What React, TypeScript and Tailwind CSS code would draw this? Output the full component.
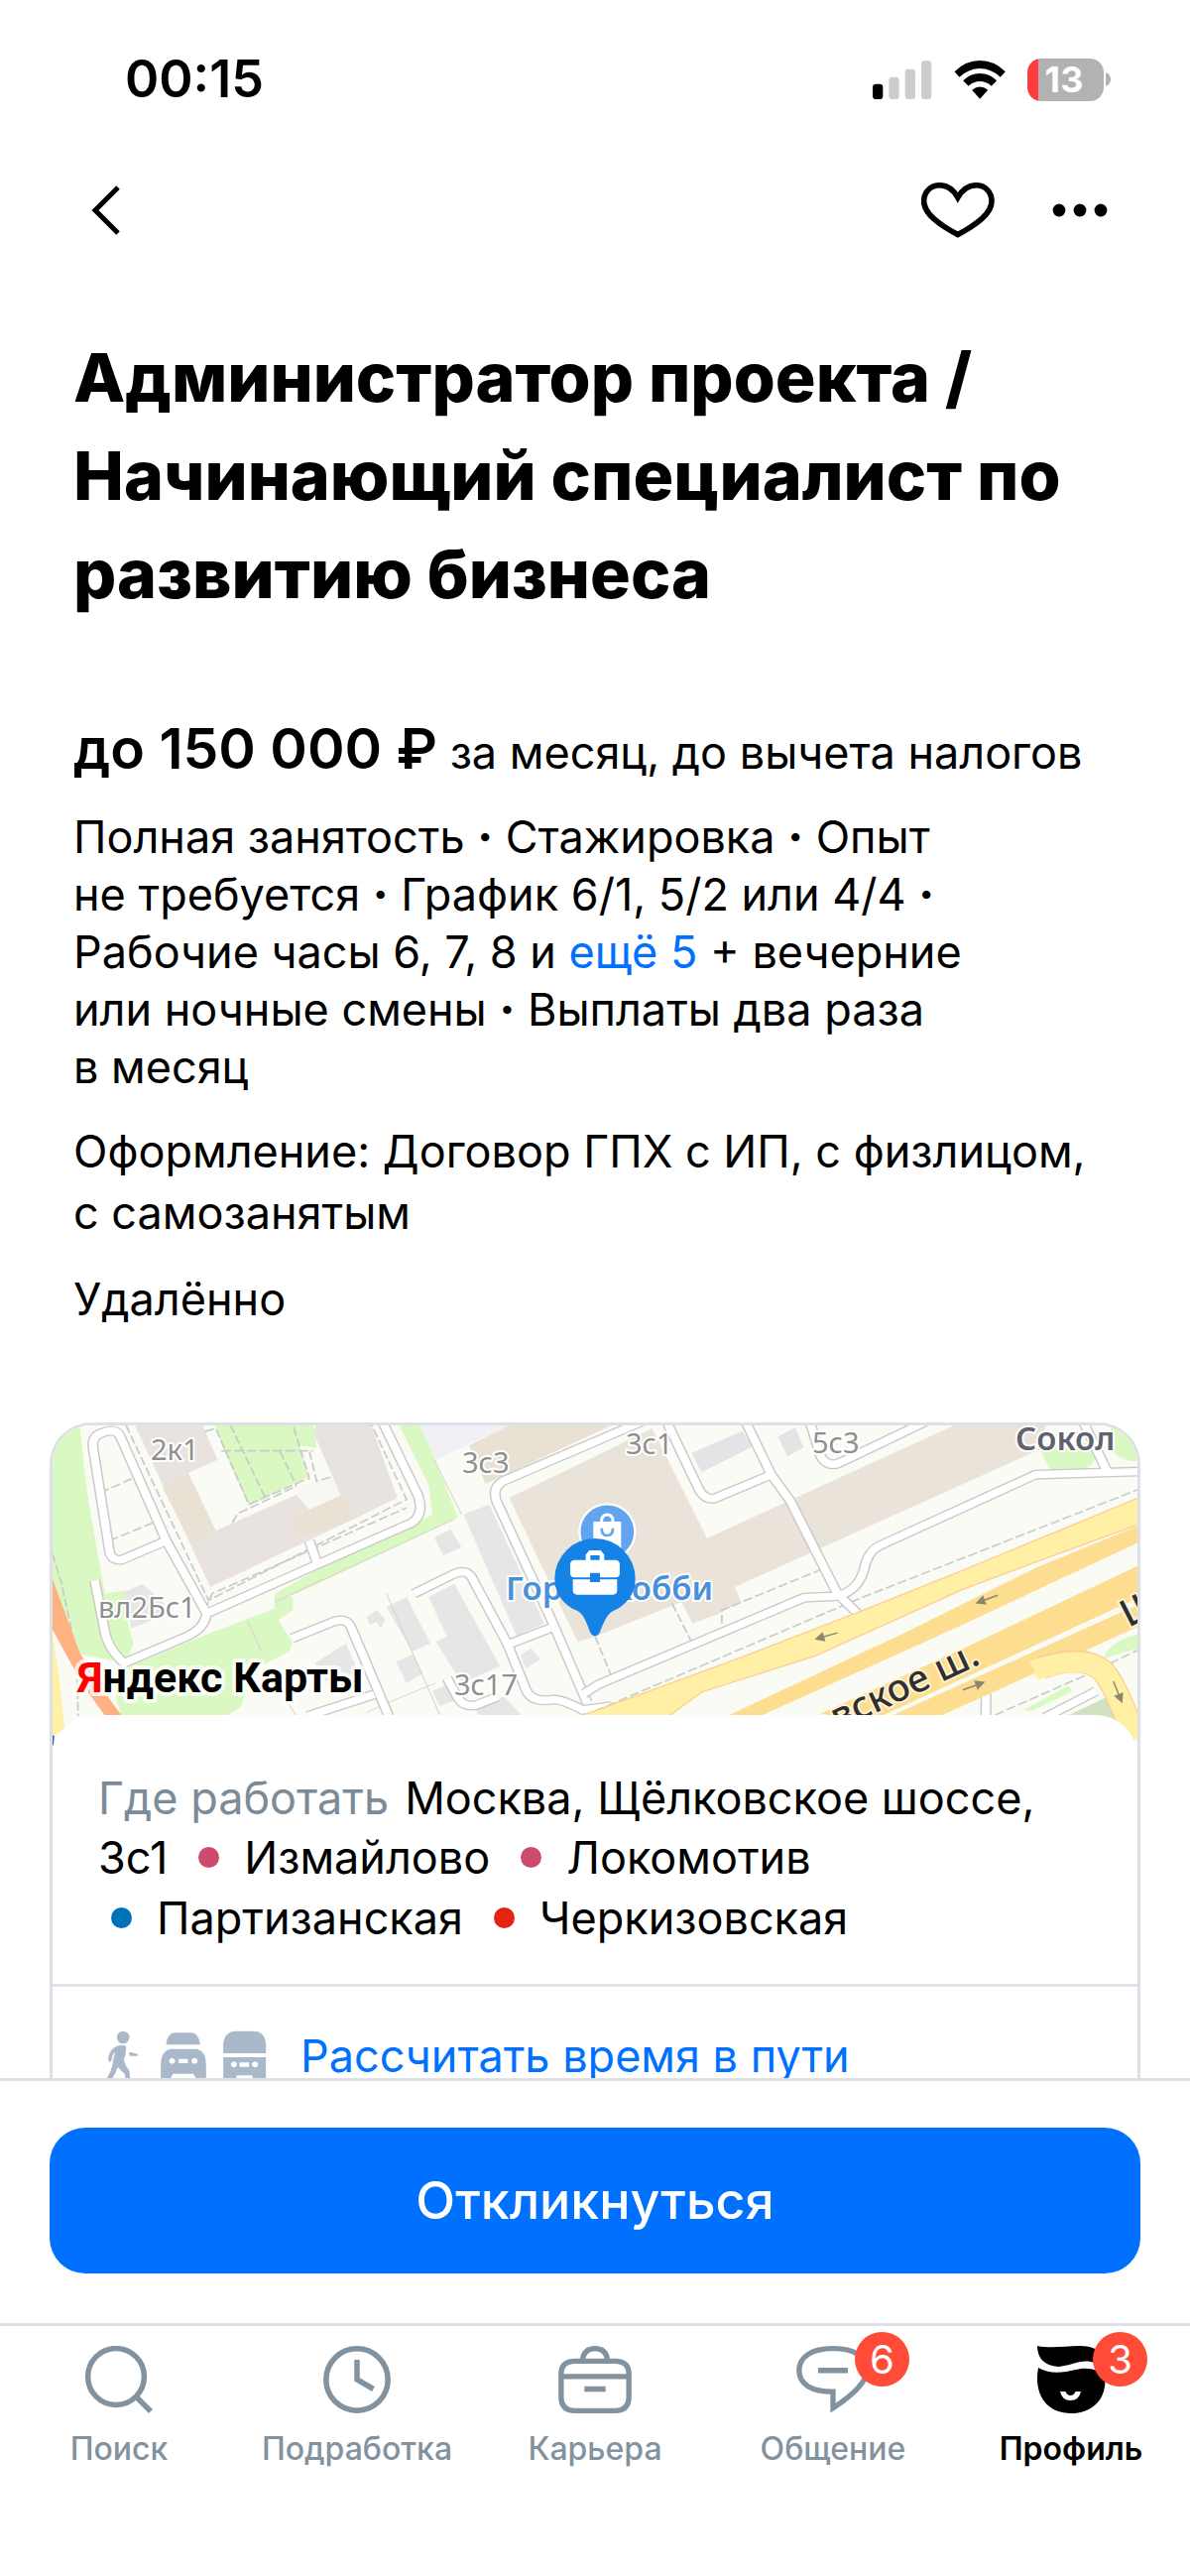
import React from "react";

const roadsLeft = [
  "M345 400L225 457Q195 462 190 430L145 115Q143 80 175 72Q208 58 220 85L345 400L455 620",
  "M455 620L1015 345Q1048 320 1032 265L930 30",
  "M455 620Q450 665 400 690L230 770Q182 722 175 660L150 520",
  "M757 470L735 400",
  "M1640 40L1262 220Q1232 240 1245 280L1395 640L1492 890",
  "M1392 664L1280 712",
  "M1020 560L1130 500Q1168 482 1182 520L1275 712L1325 850Q1340 892 1400 880Q1425 880 1480 912L1560 900",
  "M688 695L800 645Q838 630 850 665L955 940",
  "M730 930L912 865",
  "M1110 815L1140 875Q1155 905 1190 897L1248 872",
];
const roadsRight = [
  "M-30 862L10 834L570 572L650 568Q712 560 732 490Q742 432 775 415L1200 200L1500 190",
  "M410 40L480 200L532 280L660 560L715 620",
  "M480 200L325 272Q300 278 283 245L195 40",
  "M585 40L615 145Q632 178 665 165L900 40",
  "M1330 40L1395 190",
  "M1065 862L1065 940",
  "M1225 935L1365 855",
];
const dashLeft = [
  "M235 50L460 580L1000 275L905 50",
  "M450 610L470 560L1000 300",
  "M165 255L275 200",
  "M190 400L310 345",
  "M450 70L480 60L570 290L735 210L690 50",
  "M495 128L745 128",
  "M520 50L615 270",
  "M655 130L700 235",
  "M735 130L755 220L800 205",
  "M525 345L540 318L690 240",
  "M35 440L60 530L100 740L105 930",
];
const dashRight = [
  "M0 915L720 575L1480 245",
  "M345 650L345 610L620 485",
  "M210 590L265 712",
  "M0 690L48 820",
  "M1090 927L1330 810L1480 730",
];

function Roads({ paths }: { paths: string[] }) {
  return (
    <g fill="none" strokeLinejoin="round">
      {paths.map((d) => (
        <path key={d} d={d} stroke="#c9c9c9" strokeWidth="30" />
      ))}
      {paths.map((d) => (
        <path key={d} d={d} stroke="#ffffff" strokeWidth="22" />
      ))}
    </g>
  );
}

function Dashes({ paths }: { paths: string[] }) {
  return (
    <g fill="none" stroke="#cbcbcb" strokeWidth="5" strokeDasharray="26 9">
      {paths.map((d) => (
        <path key={d} d={d} />
      ))}
    </g>
  );
}

function Arrow({ x, y, a }: { x: number; y: number; a: number }) {
  return (
    <g transform={`translate(${x} ${y}) rotate(${a})`}>
      <path d="M0 0H14" stroke="#8d8670" strokeWidth="1.5" />
      <path d="M-10 0L0 -5V5Z" fill="#8d8670" />
    </g>
  );
}

function CityMap() {
  return (
    <svg
      viewBox="3 3 1094 335"
      preserveAspectRatio="xMidYMid slice"
      className="block h-[335px] w-full bg-[#fbfbf6]"
      role="img"
      aria-label="Карта: Москва, Щёлковское шоссе, 3с1"
    >
      <rect x="0" y="0" width="1100" height="340" fill="#fbfbf6" />
      <g transform="translate(-10 -14) scale(0.37 0.3333)">
        <g fill="#daf8c2">
          <path d="M30 40L108 40L130 260L165 480L178 560L235 550L235 620L255 710L235 770L100 740L30 520Z" />
          <path d="M225 785L300 755L440 690L640 605V570H690V610L650 640L690 710L680 735L600 780L560 860L550 900L510 930H222L205 860Z" />
          <path d="M975 40H1035L1080 160L1140 330L850 482L640 590V562L760 485L1070 322L1060 230Z" />
          <path d="M475 40H745L755 120L705 110L735 205L570 295L520 170L500 120Z" />
        </g>
        <path d="M1030 40H1300L1080 155Z" fill="#f1f1f5" />
        <g fill="#e8e3de">
          <path d="M255 40H440L485 155L405 195L480 370L700 260L735 305L820 262L745 70L760 40H900L975 270L855 335L465 540Z" />
        </g>
        <g fill="#eae1d5">
          <path d="M335 240L405 195L480 370L415 410Z" />
          <path d="M688 325L830 265L855 335L700 392Z" />
          <path d="M1170 112L1300 40H1580L1215 228Z" />
        </g>
        <path d="M700 262L735 305L820 262L795 205L750 220L710 240Z" fill="#f7f8f1" />
        <g fill="#e6e6e7">
          <path d="M1155 320L1225 290L1375 650L1300 688Z" />
          <path d="M1060 570L1130 530L1255 780L1150 830L1080 705L1110 690Z" />
          <path d="M945 600L1000 570L1065 710L1015 735Z" />
          <path d="M1075 390L1120 365L1150 420L1100 445Z" />
          <path d="M890 630L920 610L942 640L930 665L918 645L900 655Z" />
          <path d="M1310 745L1340 725L1365 760L1325 785Z" />
          <path d="M970 765L1015 745L1045 800L1000 830Z" />
          <path d="M750 770L835 710L870 800L790 840Z" />
          <path d="M230 555L280 530L340 590L330 630L250 665Z" />
          <path d="M1190 912L1265 870L1320 935H1200Z" />
          <path d="M1070 855L1110 835L1140 880L1090 900Z" />
        </g>
        <path d="M640 585L1130 335M945 560L1090 925M950 890L1080 830M565 640L605 735M670 880L700 930M890 920L950 890M1075 155L1150 320" fill="none" stroke="#d9d4cc" strokeWidth="3" />
        <Dashes paths={dashLeft} />
        <Roads paths={roadsLeft} />
        <path d="M33 510L60 590L110 740L165 840L228 935H182L120 840L70 740L33 665Z" fill="#ffb181" />
        <path d="M33 665L55 830L68 970L33 990Z" fill="#fff0a8" />
        <path d="M30 985L40 990L38 1015L30 1030Z" fill="#3c62b8" />
        <g transform="translate(1514 0)">
          <path d="M-234 270L0 145L155 60L305 392L1000 40H1230L1215 122L380 540L397 583L335 622L265 650L235 585L0 690L-48 706Z" fill="#eae3d9" />
          <g fill="#e4e4e6">
            <path d="M262 135L400 68L430 115L290 193Z" />
            <path d="M498 85L545 57L568 118L524 145Z" />
          </g>
          <g fill="#daf8c2">
            <path d="M1210 120L1370 100Q1370 165 1340 180L1240 187Z" />
            <path d="M1405 40H1490V160Q1430 165 1405 120Z" />
            <path d="M1388 755Q1390 710 1490 678V722Z" />
            <path d="M1168 912L1290 838L1300 856L1190 915Z" />
          </g>
          <path d="M1285 930L1390 875L1430 940H1290Z" fill="#cfe3c4" />
          <Dashes paths={dashRight} />
          <Roads paths={roadsRight} />
          <path d="M-60 935L0 915L400 752L720 615L1000 490L1490 266V347L1200 465L1000 548L600 748L290 858L195 935Z" fill="#fff0a5" stroke="#fbcf93" strokeWidth="4" />
          <path d="M1490 350V400L1000 655L440 935H350L850 675L1200 482Z" fill="#fddd8f" />
          <path d="M1490 470V568L770 935H590L1010 722Z" fill="#fddd8f" />
          <path d="M1490 588V655L1220 790L930 935H795Z" fill="#fddd8f" />
          <path d="M1215 785Q1330 740 1385 795Q1425 850 1470 1000" fill="none" stroke="#fbcf93" strokeWidth="68" />
          <path d="M1195 792Q1330 740 1385 795Q1425 850 1470 1000" fill="none" stroke="#fff0a5" strokeWidth="61" />
        </g>
      </g>

      <Arrow x={781} y={216} a={-16} />
      <Arrow x={943} y={179} a={-20} />
      <Arrow x={934} y={265} a={160} />
      <Arrow x={1078} y={274} a={248} />

      <g fontFamily="'Noto Sans', sans-serif" stroke="#ffffff" strokeWidth="4" paintOrder="stroke" strokeLinejoin="round">
        <g fontSize="29" fill="#8f8f8f">
          <text x="102" y="38">2к1</text>
          <text x="416" y="51">3с3</text>
          <text x="49" y="197">вл2Бс1</text>
          <text x="408" y="275">3с17</text>
          <text x="581" y="32">3с1</text>
          <text x="769" y="31">5с3</text>
        </g>
        <text x="974" y="28" fontSize="33" fontWeight="600" fill="#62626c">Сокол</text>
        <text x="460" y="179" fontSize="33" fontWeight="600" fill="#4a90d9">Город Хобби</text>
        <g fontSize="38" fontWeight="500" fill="#2f2f33" stroke="#fff3d0">
          <text transform="translate(940 243) rotate(-25)" textAnchor="end">Щёлковское ш.</text>
          <text transform="translate(1088 207) rotate(-27)">Щёлковское ш.</text>
        </g>
      </g>
      <text x="28" y="272" fontFamily="Roboto, 'Noto Sans', sans-serif" fontSize="43" fontWeight="700" stroke="#ffffff" strokeOpacity="0.8" strokeWidth="8" paintOrder="stroke" strokeLinejoin="round">
        <tspan fill="#ff0000">Я</tspan>
        <tspan fill="#000000">ндекс Карты</tspan>
      </text>

      <g transform="translate(440 56) scale(0.3333)">
        <circle cx="367" cy="163" r="84" fill="#62a5ee" stroke="#ffffff" strokeWidth="7" />
        <path d="M325 132H409V215H325Z" fill="#ffffff" />
        <path d="M350 135V128a17 17 0 0 1 34 0V135" fill="none" stroke="#ffffff" strokeWidth="9" />
        <path d="M350 152q0 22 17 22t17 -22" fill="none" stroke="#62a5ee" strokeWidth="8" />
        <path d="M330 183A122 122 0 0 1 452 305C452 350 425 385 385 402C366 411 355 440 343 470Q330 486 317 470C305 440 296 411 277 402C235 385 208 350 208 305A122 122 0 0 1 330 183Z" fill="#1583e6" />
        <path d="M302 250V232L313 219H347L358 232V250H344V234H316V250Z" fill="#ffffff" />
        <path d="M270 248H390Q405 248 405 262V288Q405 301 392 301H345V287H315V301H268Q255 301 255 288V262Q255 248 270 248Z" fill="#ffffff" />
        <path d="M263 307H315V315H345V307H397V340Q397 353 384 353H276Q263 353 263 340Z" fill="#ffffff" />
      </g>
    </svg>
  );
}

function StatusBar() {
  return (
    <div className="flex h-[160px] items-center justify-between pr-[80px] pl-[126px]">
      <span className="text-[52px] leading-[60px] font-semibold">00:15</span>
      <div className="flex items-center gap-[22px]">
        <svg viewBox="54 60 180 117" className="h-[39px] w-[60px]" aria-label="Сигнал сети">
          <rect x="54" y="131" width="31" height="46" rx="10" fill="#000" />
          <g fill="#cdcdcd">
            <rect x="103" y="110" width="31" height="67" rx="10" />
            <rect x="152" y="86" width="31" height="91" rx="10" />
            <rect x="201" y="61" width="31" height="116" rx="10" />
          </g>
        </svg>
        <svg viewBox="301 60 155 117" className="h-[39px] w-[52px]" aria-label="Wi-Fi">
          <path d="M302 94Q335 60 379 60T456 94L441 110Q412 84 379 84T317 110Z" />
          <path d="M328 121Q350 99 379 99T430 121L414 137Q398 123 379 123T344 137Z" />
          <path d="M355 149Q379 130 403 149L379 176Z" />
        </svg>
        <div className="flex items-center gap-[2px]">
          <div className="flex h-[43px] w-[77px] items-center justify-center rounded-[14px] bg-[linear-gradient(to_right,#ff3b41_11px,#b2b2b2_11px)] pr-[3px] text-[36px] leading-[43px] font-bold text-white">
            13
          </div>
          <svg viewBox="0 0 5 14" className="h-[14px] w-[5px]" aria-hidden="true">
            <path d="M0 0Q5 2 5 7T0 14Z" fill="#b2b2b2" />
          </svg>
        </div>
      </div>
    </div>
  );
}

function Header() {
  return (
    <header className="flex h-[104px] items-center justify-between pr-[83px] pl-[92px]">
      <button type="button" aria-label="Назад">
        <svg viewBox="0 0 30 50" className="h-[50px] w-[30px]" fill="none" stroke="#000" strokeWidth="5">
          <path d="M27 2L4 25L27 48" />
        </svg>
      </button>
      <div className="flex items-center gap-[58px]">
        <button type="button" aria-label="В избранное">
          <svg viewBox="207 433 223 168" className="h-[56px] w-[74px]" fill="none" stroke="#000" strokeWidth="17">
            <path d="M318 478Q297 441 263 441C235 441 215 462 215 489C215 528 262 561 318 591C374 561 421 528 421 489C421 462 401 441 374 441Q340 441 318 478Z" />
          </svg>
        </button>
        <button type="button" aria-label="Ещё">
          <svg viewBox="0 0 56 14" className="h-[14px] w-[56px]">
            <circle cx="7" cy="7" r="6.4" />
            <circle cx="28" cy="7" r="6.4" />
            <circle cx="49" cy="7" r="6.4" />
          </svg>
        </button>
      </div>
    </header>
  );
}

function Metro({ dot, name }: { dot: string; name: string }) {
  return (
    <span className="inline-flex items-baseline">
      <span className={"mr-[25px] ml-[13px] size-[21px] self-center rounded-full " + dot} />
      {name}
    </span>
  );
}

function Dot() {
  return <span className="font-extrabold">·</span>;
}

function TransportIcons() {
  return (
    <svg viewBox="84 82 482 162" className="h-[54px] w-[161px]" fill="#a9b9c9" aria-hidden="true">
      <circle cx="132" cy="103" r="19" />
      <path d="M112 130Q128 123 141 130Q142 150 134 172Q140 190 151 205L155 244H141L137 214L116 193Q108 215 97 230L84 244L76 236Q92 216 99 190Q102 165 108 147Q98 155 97 173Q91 180 87 173Q86 142 112 130Z" />
      <path d="M150 147L176 153V159H152Z" />
      <path d="M262 125Q265 89 290 89H338Q361 89 365 125Z" />
      <path fillRule="evenodd" d="M275 138H355Q383 145 383 185V244H352V226L345 213H283L276 226V244H246V185Q246 145 275 138ZM280 165a9 9 0 1 0 .1 0ZM348 165a9 9 0 1 0 .1 0ZM300 168V181H328V168Z" />
      <path d="M435 151V125Q437 84 475 84H525Q562 84 564 125V151Z" />
      <path fillRule="evenodd" d="M435 163H564V244H530L522 218H476L468 244H435ZM467 176a9 9 0 1 0 .1 0ZM531 176a9 9 0 1 0 .1 0ZM484 179V192H513V179Z" />
    </svg>
  );
}

const navIcon = "h-[68px] w-[74px]";

const tabs = [
  {
    label: "Поиск",
    icon: (
      <svg viewBox="-3 0 74 68" className={navIcon} fill="none" stroke="currentColor" strokeWidth="5.5">
        <circle cx="31" cy="31" r="28.4" />
        <path d="M51 51L66 66" />
      </svg>
    ),
  },
  {
    label: "Подработка",
    icon: (
      <svg viewBox="-3 0 74 68" className={navIcon} fill="none" stroke="currentColor" strokeWidth="5.5">
        <circle cx="34" cy="34" r="31.2" />
        <path d="M34 14V34L50.500 43.500" />
      </svg>
    ),
  },
  {
    label: "Карьера",
    icon: (
      <svg viewBox="130 75 220 203" className={navIcon} fill="none" stroke="currentColor" strokeWidth="16">
        <path d="M180 121H300Q342 121 342 160V228Q342 270 300 270H180Q138 270 138 228V160Q138 121 180 121ZM138 167H342M208 205H272M202 120Q206 83 240 83T278 120" />
      </svg>
    ),
  },
  {
    label: "Общение",
    badge: "6",
    icon: (
      <svg viewBox="850 75 220 203" className={navIcon} fill="none" stroke="currentColor" strokeWidth="16">
        <path d="M915 149H1005M960 262V213C895 213 858 190 858 150C858 108 895 83 960 83C1025 83 1062 108 1062 148C1062 185 1012 228 960 262Z" />
      </svg>
    ),
  },
  {
    label: "Профиль",
    badge: "3",
    active: true,
    icon: (
      <svg viewBox="-3 0 74 68" className={navIcon} fill="currentColor">
        <path d="M0 0C14 3 28 0 43 0Q62 0 66 12V23C50 8 38 20 21 21Q0 19 0 0Z" />
        <path d="M1 22C14 29 25 27 39 24C52 21 60 24 68 30C71 53 56 68 34 68C10 68 -4 50 1 22ZM23 46Q25 55 33.500 55T44 46H38.500Q37 50 33.500 50T28.500 46Z" fillRule="evenodd" />
      </svg>
    ),
  },
];

function TabBar() {
  return (
    <nav className="grid h-[255px] grid-cols-5 border-t-[3px] border-[#dfe2e7]">
      {tabs.map((tab) => (
        <a
          key={tab.label}
          href="#"
          aria-current={tab.active ? "page" : undefined}
          className={"flex flex-col items-center gap-[16px] pt-[20px] " + (tab.active ? "font-semibold text-black" : "font-medium text-[#82929e]")}
        >
          <span className="relative">
            {tab.icon}
            {tab.badge && (
              <span className="absolute -top-[14px] -right-[40px] flex size-[55px] items-center justify-center rounded-full bg-[#ff4b38] text-[40px] leading-none font-normal text-white">
                {tab.badge}
              </span>
            )}
          </span>
          <span className="text-[32px] leading-[40px]">{tab.label}</span>
        </a>
      ))}
    </nav>
  );
}

export default function App() {
  return (
    <div className="flex h-screen flex-col bg-white font-['Inter',sans-serif] text-black">
      <StatusBar />
      <Header />
      <main className="min-h-0 flex-1 overflow-y-auto [scrollbar-width:none]">
        <div className="px-[74px] pt-[67px]">
          <h1 className="text-[68px] leading-[99px] font-extrabold">
            Администратор проекта /<br />
            Начинающий специалист по
            <br />
            развитию бизнеса
          </h1>
          <p className="mt-[89px] text-[45px] leading-[76px]">
            <span className="text-[57px] font-semibold">до 150 000 ₽</span> за месяц, до вычета налогов
          </p>
          <p className="mt-[18px] text-[45px] leading-[58px]">
            Полная занятость <Dot /> Стажировка <Dot /> Опыт
            <br />
            не требуется <Dot /> График 6/1, 5/2 или 4/4 <Dot />
            <br />
            Рабочие часы 6, 7, 8 и{" "}
            <a href="#" className="text-[#0070ff]">
              ещё 5
            </a>{" "}
            + вечерние
            <br />
            или ночные смены <Dot /> Выплаты два раза
            <br />в месяц
          </p>
          <p className="mt-[25px] text-[45px] leading-[62px]">
            Оформление: Договор ГПХ с ИП, с физлицом,
            <br />с самозанятым
          </p>
          <p className="mt-[25px] text-[45px] leading-[62px]">Удалённо</p>
        </div>

        <section className="mx-[50px] mt-[93px] overflow-hidden rounded-t-[42px] border-[3px] border-b-0 border-[#dde1e7]">
          <CityMap />
          <div className="relative -mt-[43px] rounded-t-[42px] bg-white px-[46px] pt-[54px] pb-[36px]">
            <p className="text-[45px] leading-[59px]">
              <span className="mr-[16px] text-[#7c8b98]">Где работать</span>Москва, Щёлковское шоссе,
            </p>
            <div className="flex flex-wrap gap-x-[18px] text-[45px] leading-[61px]">
              <span>3с1</span>
              <Metro dot="bg-[#cd4c6e]" name="Измайлово" />
              <Metro dot="bg-[#cd4c6e]" name="Локомотив" />
            </div>
            <div className="flex flex-wrap gap-x-[18px] text-[45px] leading-[61px]">
              <Metro dot="bg-[#0072ba]" name="Партизанская" />
              <Metro dot="bg-[#e42313]" name="Черкизовская" />
            </div>
          </div>
          <div className="flex items-start gap-[34px] border-t-[3px] border-[#dfe2e7] px-[55px] pt-[44px] pb-[44px]">
            <TransportIcons />
            <a href="#" className="text-[45px] leading-[52px] text-[#0070ff]">
              Рассчитать время в пути
            </a>
          </div>
        </section>
      </main>
      <div className="border-t-[3px] border-[#dfe2e7] bg-white px-[50px] pt-[47px] pb-[50px]">
        <button type="button" className="h-[147px] w-full rounded-[36px] bg-[#0070ff] text-[52px] font-medium text-white">
          Откликнуться
        </button>
      </div>
      <TabBar />
    </div>
  );
}
